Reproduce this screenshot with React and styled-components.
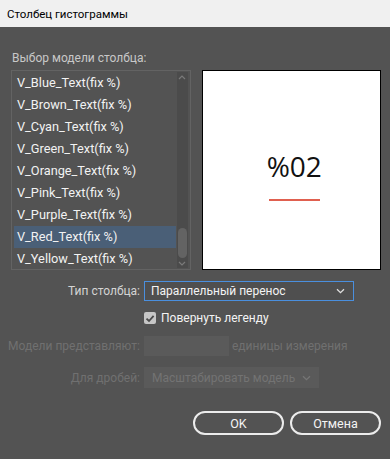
import styled, { createGlobalStyle } from 'styled-components';

const GlobalStyle = createGlobalStyle`
  html, body {
    margin: 0;
    padding: 0;
    background: #535353;
  }
  * {
    box-sizing: border-box;
  }
`;

const Dialog = styled.div`
  width: 390px;
  height: 459px;
  display: flex;
  flex-direction: column;
  background: #535353;
  font-family: Roboto, 'Noto Sans', sans-serif;
  font-size: 12px;
  color: #f0f0f0;
  overflow: hidden;
`;

const TitleBar = styled.div`
  height: 27px;
  flex-shrink: 0;
  display: flex;
  align-items: center;
  padding-left: 7px;
  background: #f0f0f0;
  color: #000;
  font-size: 11.5px;
`;

const Body = styled.div`
  flex: 1;
  display: flex;
  flex-direction: column;
  padding: 23px 9px 0 11px;
`;

const SectionLabel = styled.div`
  height: 16px;
  line-height: 16px;
  color: #c8c8c8;
  margin-bottom: 4px;
  padding-left: 1px;
`;

const ModelRow = styled.div`
  display: flex;
  gap: 11px;
  height: 200px;
`;

const ListBox = styled.div`
  width: 180px;
  height: 200px;
  border: 1px solid #636363;
  display: flex;
  padding: 1px 2px 0 2px;
  overflow: hidden;
`;

const Items = styled.div`
  flex: 1;
  display: flex;
  flex-direction: column;
`;

const Item = styled.div`
  height: 22px;
  line-height: 22px;
  flex-shrink: 0;
  padding-left: 3px;
  color: #f2f2f2;
  font-size: 12.75px;
  white-space: nowrap;
  background: ${p => (p.$selected ? '#4a5f77' : 'transparent')};
`;

const ScrollTrack = styled.div`
  width: 11px;
  margin: 0 0 1px 1px;
  background: #4b4b4b;
  display: flex;
  flex-direction: column;
  align-items: center;
  justify-content: space-between;
  padding: 3px 0 2px;
`;

const ScrollSpacer = styled.div`
  flex: 1;
  width: 100%;
  display: flex;
  flex-direction: column;
  justify-content: flex-end;
  align-items: center;
  padding-bottom: 3px;
`;

const Thumb = styled.div`
  width: 9px;
  height: 30px;
  border-radius: 5px;
  background: #636363;
`;

const Preview = styled.div`
  width: 180px;
  height: 200px;
  background: #fff;
  border: 1px solid #000;
  display: flex;
  flex-direction: column;
  align-items: center;
  justify-content: center;
  padding: 10px 0 0 6px;
`;

const PreviewText = styled.div`
  font-family: 'Open Sans', 'Noto Sans', sans-serif;
  font-size: 28px;
  color: #111;
  line-height: 32px;
`;

const PreviewBar = styled.div`
  width: 51px;
  height: 2px;
  background: #e0604f;
  margin-top: 17px;
`;

const FormRow = styled.div`
  display: grid;
  grid-template-columns: 129px auto auto;
  justify-content: start;
  align-items: center;
  column-gap: 4px;
  height: 20px;
  margin-top: ${p => p.$top}px;
`;

const FieldLabel = styled.div`
  display: flex;
  justify-content: flex-end;
  white-space: nowrap;
  color: ${p => (p.$disabled ? '#707070' : '#d4d4d4')};
`;

const Select = styled.div`
  width: ${p => p.$width}px;
  height: ${p => (p.$focused ? 20 : 21)}px;
  display: flex;
  align-items: center;
  justify-content: space-between;
  padding: 0 8px 0 ${p => (p.$focused ? 6 : 8)}px;
  border: ${p => (p.$focused ? '1px solid #4a8fde' : 'none')};
  background: ${p => (p.$focused ? '#4f4f4f' : '#5a5a5a')};
  color: ${p => (p.$disabled ? '#737373' : '#f4f4f4')};
  white-space: nowrap;
`;

const TextField = styled.div`
  width: 85px;
  height: 20px;
  background: #5a5a5a;
`;

const Suffix = styled.div`
  color: #707070;
  white-space: nowrap;
  margin-left: -1px;
`;

const CheckLine = styled.label`
  display: flex;
  align-items: center;
  gap: 5px;
  color: #f4f4f4;
`;

const CheckBox = styled.span`
  width: 12px;
  height: 12px;
  border-radius: 2px;
  background: #c6c6c6;
  display: flex;
  align-items: center;
  justify-content: center;
`;

const Buttons = styled.div`
  display: flex;
  justify-content: flex-end;
  gap: 6px;
  margin-top: 24px;
`;

const Button = styled.button`
  width: 91px;
  height: 24px;
  border-radius: 12px;
  border: 2px solid #ececec;
  background: transparent;
  color: #f4f4f4;
  font-family: Roboto, 'Noto Sans', sans-serif;
  font-size: 12.5px;
  padding: 0;
`;

const Chevron = ({ color = '#e0e0e0' }) => (
  <svg width="9" height="6" viewBox="0 0 9 6">
    <path d="M1 1.2 L4.5 4.6 L8 1.2" fill="none" stroke={color} strokeWidth="1.3" />
  </svg>
);

const Arrow = ({ up }) => (
  <svg width="8" height="5" viewBox="0 0 8 5">
    <path d={up ? 'M1 4 L4 1 L7 4' : 'M1 1 L4 4 L7 1'} fill="none" stroke="#7a7a7a" strokeWidth="1.2" />
  </svg>
);

const models = [
  'V_Blue_Text(fix %)',
  'V_Brown_Text(fix %)',
  'V_Cyan_Text(fix %)',
  'V_Green_Text(fix %)',
  'V_Orange_Text(fix %)',
  'V_Pink_Text(fix %)',
  'V_Purple_Text(fix %)',
  'V_Red_Text(fix %)',
  'V_Yellow_Text(fix %)',
];

export default function App() {
  const selected = 'V_Red_Text(fix %)';

  return (
    <>
      <GlobalStyle />
      <Dialog>
        <TitleBar>Столбец гистограммы</TitleBar>
        <Body>
          <SectionLabel>Выбор модели столбца:</SectionLabel>
          <ModelRow>
            <ListBox>
              <Items>
                {models.map(m => (
                  <Item key={m} $selected={m === selected}>{m}</Item>
                ))}
              </Items>
              <ScrollTrack>
                <Arrow up />
                <ScrollSpacer>
                  <Thumb />
                </ScrollSpacer>
                <Arrow />
              </ScrollTrack>
            </ListBox>
            <Preview>
              <PreviewText>%02</PreviewText>
              <PreviewBar />
            </Preview>
          </ModelRow>

          <FormRow $top={11}>
            <FieldLabel>Тип столбца:</FieldLabel>
            <Select $width={210} $focused>
              <span>Параллельный перенос</span>
              <Chevron />
            </Select>
          </FormRow>

          <FormRow $top={7}>
            <span />
            <CheckLine>
              <CheckBox>
                <svg width="10" height="9" viewBox="0 0 10 9">
                  <path d="M1.5 4.6 L4 7 L8.6 1.8" fill="none" stroke="#4a4a4a" strokeWidth="1.8" />
                </svg>
              </CheckBox>
              Повернуть легенду
            </CheckLine>
          </FormRow>

          <FormRow $top={8}>
            <FieldLabel $disabled>Модели представляют:</FieldLabel>
            <TextField />
            <Suffix>единицы измерения</Suffix>
          </FormRow>

          <FormRow $top={11}>
            <FieldLabel $disabled>Для дробей:</FieldLabel>
            <Select $width={175} $disabled>
              <span>Масштабировать модель</span>
              <Chevron color="#767676" />
            </Select>
          </FormRow>

          <Buttons>
            <Button>OK</Button>
            <Button>Отмена</Button>
          </Buttons>
        </Body>
      </Dialog>
    </>
  );
}
